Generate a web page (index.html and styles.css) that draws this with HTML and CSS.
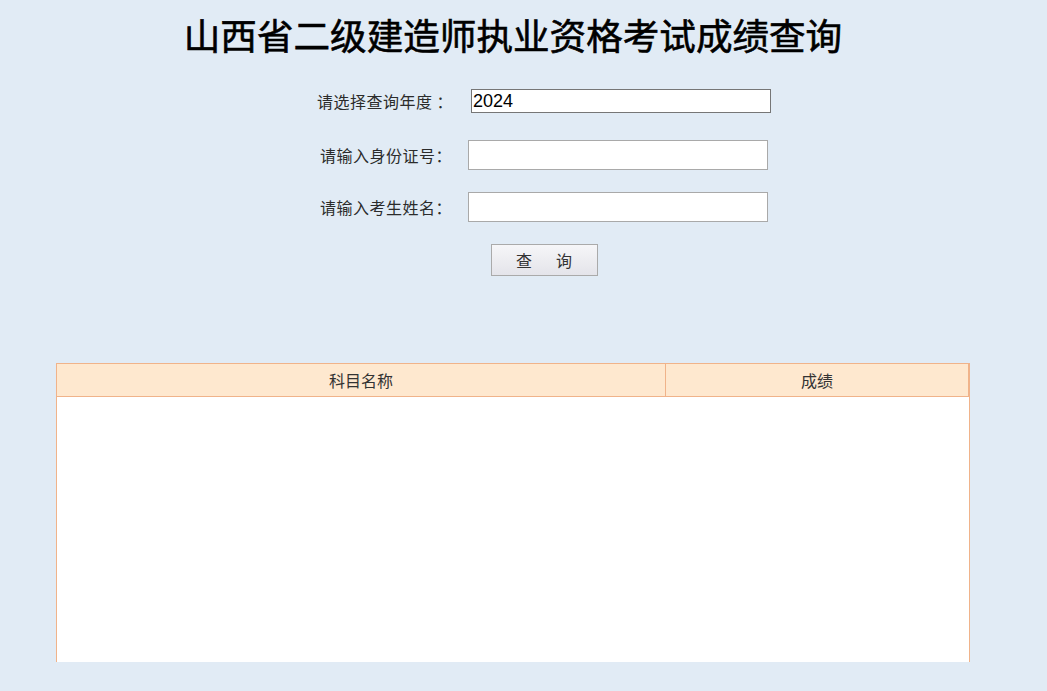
FILE: index.html
```html
<!DOCTYPE html>
<html lang="zh-CN">
<head>
    <meta charset="UTF-8">
    <meta name="viewport" content="width=device-width, initial-scale=1.0">
    <title>山西省二级建造师执业资格考试成绩查询</title>
    <link rel="stylesheet" href="styles.css">
</head>
<body>
    <div class="container">
        <h1>山西省二级建造师执业资格考试成绩查询</h1>
        <div class="form">
            <div class="row row-year">
                <label class="label">请选择查询年度 ：</label>
                <input type="text" class="year" value="2024">
            </div>
            <div class="row row-id">
                <label class="label">请输入身份证号：</label>
                <input type="text" class="field">
            </div>
            <div class="row row-name">
                <label class="label">请输入考生姓名：</label>
                <input type="text" class="field">
            </div>
            <div class="row row-btn">
                <button class="btn">查　询</button>
            </div>
        </div>
        <div class="result">
            <div class="result-head">
                <div class="col col-name">科目名称</div>
                <div class="col col-score">成绩</div>
            </div>
            <div class="result-body"></div>
        </div>
    </div>
</body>
</html>
```

FILE: styles.css
```css
body {
    margin: 0;
    background-color: #e1ebf5;
    font-family: "Liberation Serif", "Noto Sans CJK SC", serif;
    color: #333;
    overflow: hidden;
}

.container {
    width: 914px;
    margin-left: 56px;
}

h1 {
    margin: 0;
    height: 70px;
    line-height: 70px;
    text-align: center;
    font-size: 36.6px;
    font-weight: 400;
    -webkit-text-stroke: 0.6px #000;
    color: #000;
    font-family: "Noto Sans CJK SC", serif;
}

.form {
    padding-left: 62px;
}

.row {
    display: flex;
    justify-content: center;
    align-items: center;
    font-family: "Noto Sans CJK SC", sans-serif;
    font-size: 16px;
    color: #333;
}

.row-year {
    margin-top: 19px;
    height: 24px;
}

.row-id {
    margin-top: 27px;
    height: 30px;
}

.row-name {
    margin-top: 22px;
    height: 30px;
}

.row-btn {
    margin-top: 22px;
    height: 32px;
}

.label {
    white-space: nowrap;
    letter-spacing: 0.5px;
    color: #2b2b2b;
}

.row-year .label {
    width: 154px;
}

.row-id .label,
.row-name .label {
    width: 148px;
}

.year {
    box-sizing: border-box;
    width: 300px;
    height: 24px;
    margin: 0;
    padding: 0 1px;
    border: 1px solid #767676;
    background: #fff;
    font-family: "Liberation Sans", Arial, sans-serif;
    font-size: 18px;
    color: #000;
}

.field {
    box-sizing: border-box;
    width: 300px;
    height: 30px;
    margin: 0;
    border: 1px solid #a9a9a9;
    background: #fff;
}

.btn {
    box-sizing: border-box;
    width: 107px;
    height: 32px;
    padding: 0 0 0 4px;
    border: 1px solid #aaa;
    background: linear-gradient(#f6f6f8, #e4e4ea);
    font-family: "Noto Sans CJK SC", sans-serif;
    font-size: 16px;
    letter-spacing: 4px;
    color: #333;
    cursor: pointer;
}

.result {
    margin-top: 87px;
}

.result-head {
    display: flex;
    height: 34px;
    box-sizing: border-box;
    border: 1px solid #f0b38a;
    border-right-width: 2px;
    background-color: #fee8cf;
}

.col {
    line-height: 32px;
    text-align: center;
    font-family: "Noto Sans CJK SC", sans-serif;
    font-size: 16px;
    color: #333;
}

.col-name {
    width: 608px;
    border-right: 1px solid #f0b38a;
}

.col-score {
    flex: 1;
}

.result-body {
    height: 265px;
    background: #fff;
    border-left: 1px solid #f0b38a;
    border-right: 1px solid #f0b38a;
}
```
